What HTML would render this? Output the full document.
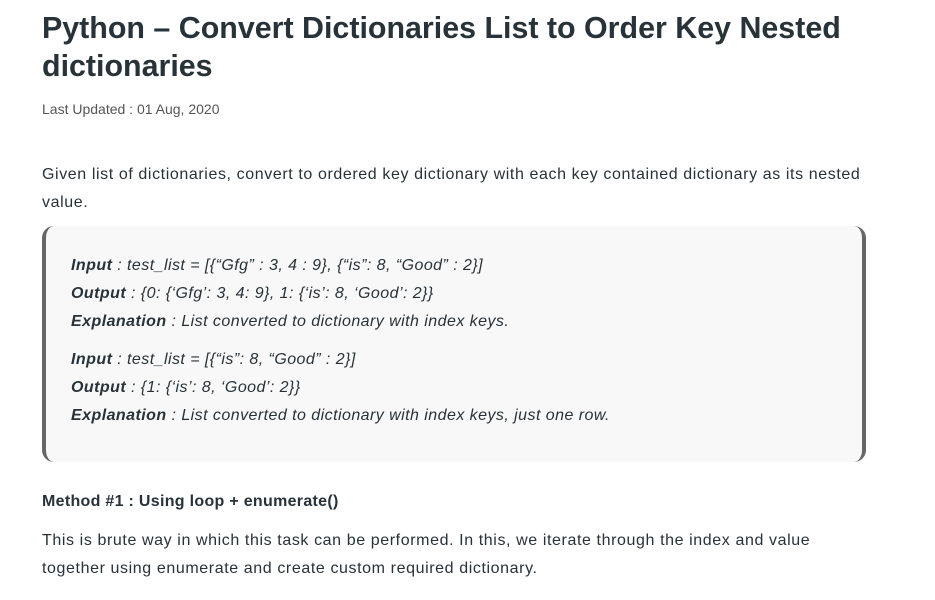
<!DOCTYPE html>
<html><head><meta charset="utf-8"><style>
body{margin:0;background:#fff;font-family:"Liberation Sans",sans-serif;color:#273239;width:935px;height:600px;overflow:hidden}
.w{position:absolute;left:42px;width:830px}
h1{margin:0;position:absolute;left:42px;top:9px;width:880px;font-size:30.4px;line-height:38px;font-weight:bold;color:#273239}
.upd{position:absolute;left:42px;top:101px;font-size:14px;color:#555}
p{margin:0;font-size:16px;line-height:28px;letter-spacing:0.6px}
.box{position:absolute;left:42px;top:226px;width:816px;height:236px;background:#f8f8f8;border-left:4px solid #666;border-right:4px solid #666;border-radius:12px}
.box .l{position:absolute;left:25px;font-size:16px;font-style:italic;color:#273239;white-space:nowrap;letter-spacing:0.45px}
.box b{font-weight:bold}
</style></head><body>
<h1>Python – Convert Dictionaries List to Order Key Nested dictionaries</h1>
<div class="upd">Last Updated : 01 Aug, 2020</div>
<div class="w" style="top:161px;width:830px"><p>Given list of dictionaries, convert to ordered key dictionary with each key contained dictionary as its nested value.</p></div>
<div class="box">
<div class="l" style="top:31px"><b>Input</b> : test_list = [{“Gfg” : 3, 4 : 9}, {“is”: 8, “Good” : 2}]</div>
<div class="l" style="top:59px"><b>Output</b> : {0: {‘Gfg’: 3, 4: 9}, 1: {‘is’: 8, ‘Good’: 2}}</div>
<div class="l" style="top:87px"><b>Explanation</b> : List converted to dictionary with index keys.</div>
<div class="l" style="top:125px"><b>Input</b> : test_list = [{“is”: 8, “Good” : 2}]</div>
<div class="l" style="top:153px"><b>Output</b> : {1: {‘is’: 8, ‘Good’: 2}}</div>
<div class="l" style="top:181px"><b>Explanation</b> : List converted to dictionary with index keys, just one row.</div>
</div>
<div class="w" style="top:493px;font-weight:bold;font-size:16px;letter-spacing:0.3px">Method #1 : Using loop + enumerate()</div>
<div class="w" style="top:527px;width:790px"><p>This is brute way in which this task can be performed. In this, we iterate through the index and value together using enumerate and create custom required dictionary.</p></div>
</body></html>
